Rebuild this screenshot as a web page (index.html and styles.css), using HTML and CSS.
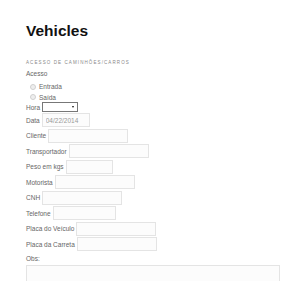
FILE: index.html
```
<!DOCTYPE html>
<html lang="pt">
<head>
	<meta charset="UTF-8">
	<title>Vehicles</title>
	<link rel="stylesheet" href="styles.css">
</head>
<body>
	<h1 class="title">Vehicles</h1>

	<form class="vehicle-form">
		<div class="legend">Acesso de caminhões/carros</div>

		<div class="row">Acesso</div>
		<div class="radio"><span class="dot"></span> Entrada</div>
		<div class="radio"><span class="dot"></span> Saída</div>

		<div class="row row-select">
			<label>Hora</label>
			<span class="select"><span class="caret"></span></span>
		</div>

		<div class="row"><label>Data</label><input class="field w48" type="text" value="04/22/2014"></div>
		<div class="row"><label>Cliente</label><input class="field w80" type="text"></div>
		<div class="row"><label>Transportador</label><input class="field w80" type="text"></div>
		<div class="row"><label>Peso em kgs</label><input class="field w47" type="text"></div>
		<div class="row"><label>Motorista</label><input class="field w80" type="text"></div>
		<div class="row"><label>CNH</label><input class="field w80" type="text"></div>
		<div class="row"><label>Telefone</label><input class="field w63" type="text"></div>
		<div class="row"><label>Placa do Veículo</label><input class="field w80" type="text"></div>
		<div class="row"><label>Placa da Carreta</label><input class="field w80" type="text"></div>

		<div class="row obs">Obs:</div>
		<textarea class="notes"></textarea>
	</form>
</body>
</html>
```

FILE: styles.css
```
* {
	margin: 0;
	padding: 0;
	box-sizing: border-box;
}

body {
	padding: 0 20px 0 26px;
	font-family: "Liberation Sans", Arial, sans-serif;
	font-size: 6.5px;
	color: #666;
	background: #fff;
}

.title {
	padding-top: 22px;
	font-size: 15.5px;
	line-height: 18px;
	color: #111;
}

.legend {
	margin-top: 20px;
	font-size: 4.5px;
	letter-spacing: 1.1px;
	text-transform: uppercase;
	color: #888;
	line-height: 6px;
}

.row {
	display: flex;
	align-items: center;
	gap: 2px;
	height: 15.5px;
}

.row label {
	white-space: nowrap;
}

.radio {
	display: flex;
	align-items: center;
	gap: 3px;
	height: 10.5px;
	padding-left: 4px;
}

.dot {
	width: 6px;
	height: 6px;
	border-radius: 50%;
	border: 1px solid #d0d0d0;
	background: #eee;
}

.row-select {
	height: 11px;
	margin-top: -1px;
}

.select {
	display: flex;
	align-items: center;
	justify-content: flex-end;
	width: 36px;
	height: 10px;
	border: 1px solid #777;
	background: #fff;
	padding-right: 3px;
}

.caret {
	border-left: 1.5px solid transparent;
	border-right: 1.5px solid transparent;
	border-top: 2px solid #111;
}

.field {
	height: 14px;
	border: 1px solid #e4e4e4;
	background: #fcfcfc;
	font-family: inherit;
	font-size: 6.5px;
	color: #999;
	padding: 0 3px;
	outline: none;
}

.w47 { width: 47px; }
.w48 { width: 48px; }
.w63 { width: 63px; }
.w80 { width: 80px; }

.obs {
	height: 12px;
}

.notes {
	display: block;
	width: 254px;
	height: 16px;
	margin-top: 1px;
	border: 1px solid #e4e4e4;
	border-bottom: none;
	background: #fcfcfc;
	resize: none;
}
```
